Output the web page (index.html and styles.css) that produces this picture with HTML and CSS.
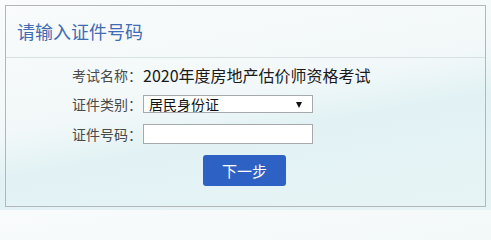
FILE: index.html
```html
<!DOCTYPE html>
<html lang="zh-CN">
<head>
<meta charset="utf-8">
<title>请输入证件号码</title>
<link rel="stylesheet" href="styles.css">
</head>
<body>
<div class="panel">
  <div class="panel-head">请输入证件号码</div>
  <div class="panel-body">
    <div class="row row-name">
      <span class="label">考试名称：</span>
      <span class="value">2020年度房地产估价师资格考试</span>
    </div>
    <div class="row row-type">
      <span class="label">证件类别：</span>
      <div class="select" role="combobox" aria-expanded="false">
        <span class="select-text">居民身份证</span>
        <span class="arrow"></span>
      </div>
    </div>
    <div class="row row-num">
      <span class="label">证件号码：</span>
      <input class="input" type="text">
    </div>
    <div class="row row-btn">
      <button class="btn" type="button">下一步</button>
    </div>
  </div>
</div>
</body>
</html>
```
FILE: styles.css
```css
html, body {
  margin: 0;
  padding: 0;
}
body {
  width: 491px;
  height: 210px;
  overflow: hidden;
  font-family: "Noto Sans CJK SC", "Noto Sans", sans-serif;
  background: linear-gradient(170deg, #f9fbfc 0%, #f2f8f9 45%, #e2f2f4 60%, #e7f4f6 100%);
}
.panel {
  box-sizing: border-box;
  margin: 5px 0 0 5px;
  width: 481px;
  height: 202px;
  border: 1px solid #b3b7b9;
  display: flex;
  flex-direction: column;
}
.panel-head {
  box-sizing: border-box;
  height: 52px;
  border-bottom: 1px solid #d7e0e3;
  padding-left: 11px;
  font-size: 18px;
  line-height: 51px;
  color: #3f6cb2;
}
.panel-body {
  padding: 6px 0 0 66px;
  display: flex;
  flex-direction: column;
}
.row {
  display: flex;
  align-items: center;
}
.row-name { height: 22px; }
.row-type { height: 18px; margin-top: 9px; }
.row-num { height: 20px; margin-top: 11px; }
.row-btn { margin-top: 11px; padding-left: 131px; }
.label {
  width: 71px;
  font-size: 14px;
  color: #4a4a4a;
  white-space: nowrap;
}
.value {
  font-size: 16px;
  color: #1a1a1a;
  white-space: nowrap;
}
.select {
  box-sizing: border-box;
  width: 170px;
  height: 18px;
  border: 1px solid #a5a9ab;
  background: #fff;
  padding: 0 10px 0 5px;
  display: flex;
  align-items: center;
  justify-content: space-between;
  overflow: hidden;
}
.select-text {
  font-size: 14px;
  line-height: 16px;
  color: #111;
}
.arrow {
  width: 0;
  height: 0;
  border-left: 3.5px solid transparent;
  border-right: 3.5px solid transparent;
  border-top: 6px solid #111;
  margin-top: 1px;
}
.input {
  box-sizing: border-box;
  width: 170px;
  height: 20px;
  margin: 0;
  border: 1px solid #a5a9ab;
  background: #fff;
  padding: 0 4px;
}
.btn {
  width: 83px;
  height: 31px;
  border: 0;
  border-radius: 3px;
  background: #2d61c3;
  color: #fff;
  font-family: "Noto Sans CJK SC", sans-serif;
  font-size: 15px;
  padding: 0;
}
```
